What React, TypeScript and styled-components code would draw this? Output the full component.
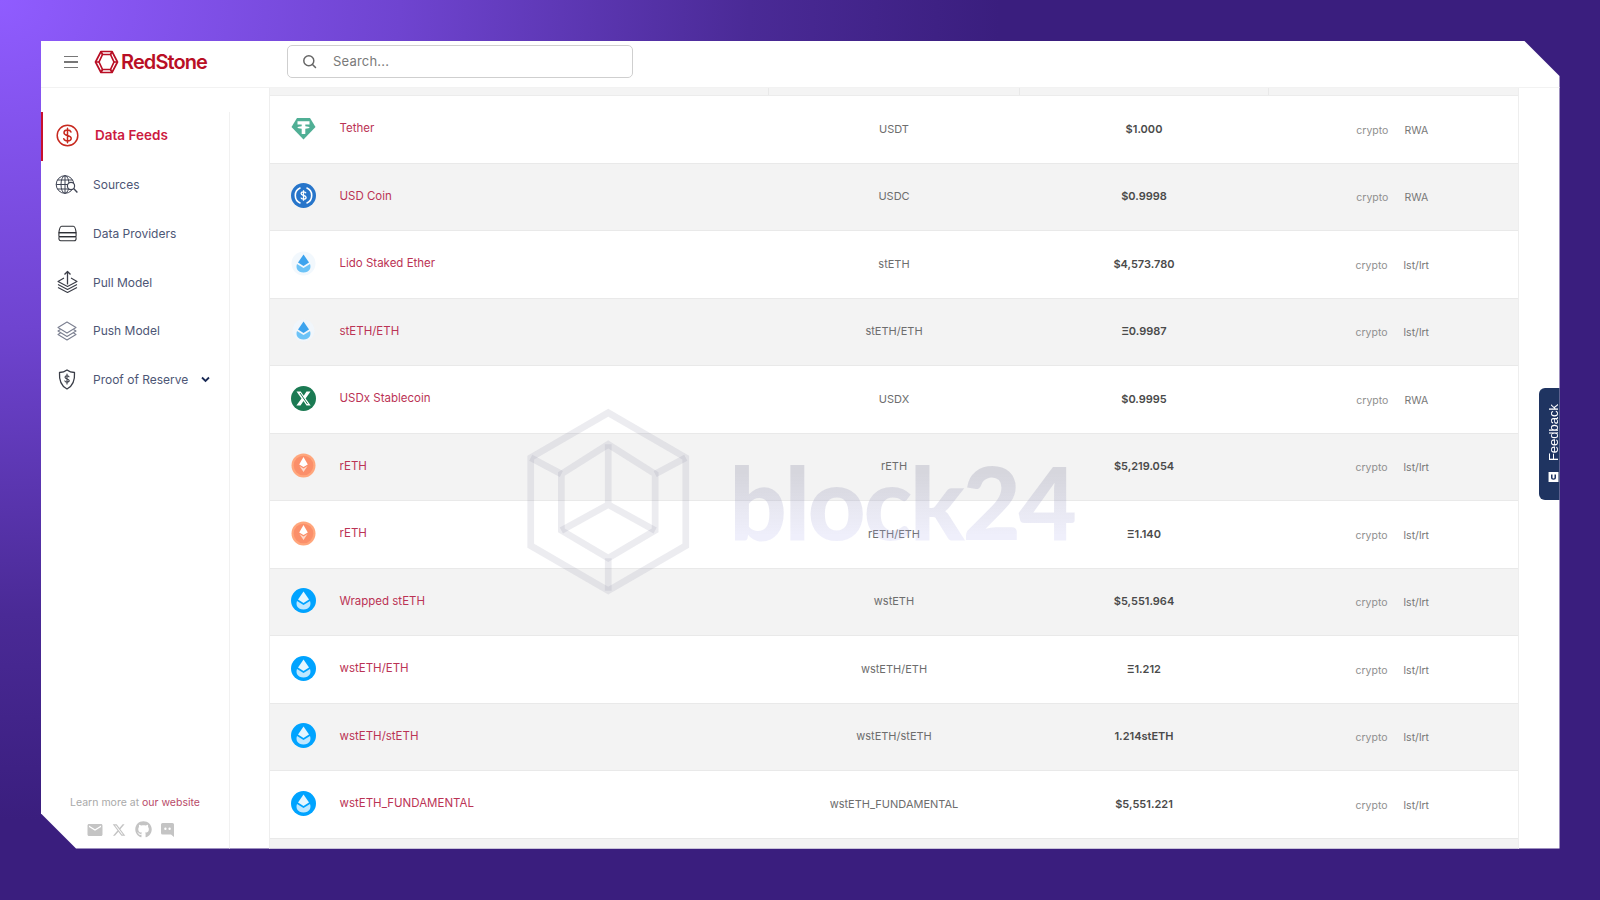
import React from "react";
import styled, { createGlobalStyle } from "styled-components";
import { FaGithub, FaXTwitter } from "react-icons/fa6";
import { MdEmail } from "react-icons/md";

const Global = createGlobalStyle`
  html, body { margin: 0; padding: 0; width: 1600px; height: 900px; overflow: hidden; }
  * { box-sizing: border-box; }
  body { font-family: "Inter", "Noto Sans", sans-serif; }
`;

const Backdrop = styled.div`
  width: 1600px;
  height: 900px;
  padding: 41px 40.5px 51.5px 41px;
  background: radial-gradient(ellipse 1000px 820px at 0 0, #905cff 0%, #6f44d0 40%, #4a2a96 75%, #3a1e7e 100%), #3a1e7e;
`;

const Panel = styled.div`
  position: relative;
  width: 100%;
  height: 100%;
  background: #fff;
  display: flex;
  flex-direction: column;
  overflow: hidden;
  clip-path: polygon(0 0, calc(100% - 35px) 0, 100% 35px, 100% 100%, 35px 100%, 0 calc(100% - 35px));
`;

const Header = styled.header`
  flex: 0 0 47px;
  display: flex;
  align-items: center;
  border-bottom: 1px solid #f2f2f2;
  padding: 0 0 4px 23px;
`;

const Burger = styled.div`
  width: 14px;
  display: flex;
  flex-direction: column;
  gap: 4px;
  margin-right: 16px;
  span { display: block; height: 1.5px; background: #777; }
`;

const Brand = styled.div`
  display: flex;
  align-items: center;
  gap: 2px;
  width: 193px;
  color: #b90f25;
  font-size: 20px;
  font-weight: 600;
  letter-spacing: -0.9px;
`;

const SearchBox = styled.div`
  width: 346px;
  height: 33px;
  margin-bottom: 2px;
  border: 1px solid #cfcfcf;
  border-radius: 5px;
  display: flex;
  align-items: center;
  gap: 16px;
  padding: 0 0 0 14px;
  color: #7a7a7a;
  font-size: 13px;
  letter-spacing: 0.2px;
`;

const Body = styled.div`
  flex: 1;
  display: flex;
  min-height: 0;
`;

const Sidebar = styled.aside`
  flex: 0 0 189px;
  margin-top: 24px;
  border-right: 1px solid #f1f1f1;
  display: flex;
  flex-direction: column;
`;

const NavItem = styled.div<{ $active?: boolean }>`
  height: 48.6px;
  display: flex;
  align-items: center;
  gap: ${(p) => (p.$active ? "15px" : "13px")};
  padding-left: ${(p) => (p.$active ? "11px" : "13px")};
  padding-bottom: ${(p) => (p.$active ? "2px" : "0")};
  border-left: ${(p) => (p.$active ? "2px solid #c8102e" : "0")};
  color: ${(p) => (p.$active ? "#cc1a3f" : "#4d5675")};
  font-size: ${(p) => (p.$active ? "13.5px" : "12px")};
  font-weight: ${(p) => (p.$active ? 600 : 400)};
`;

const NavIcon = styled.span`
  width: 26px;
  height: 26px;
  display: flex;
  align-items: center;
  justify-content: center;
  flex: none;
`;

const Chevron = styled.span`
  display: flex;
`;

const SideFooter = styled.div`
  margin-top: auto;
  padding-bottom: 10px;
  display: flex;
  flex-direction: column;
  align-items: center;
  gap: 12px;
  font-size: 10.5px;
  color: #a9a9a9;
  a { color: #b84a68; text-decoration: none; }
`;

const Socials = styled.div`
  display: flex;
  align-items: center;
  gap: 8.5px;
  padding-right: 9px;
  color: #c4c4c4;
`;

const Main = styled.main`
  flex: 1;
  padding: 0 40.5px 0 39px;
  overflow: hidden;
`;

const Table = styled.div`
  border-left: 1px solid #eee;
  border-right: 1px solid #eee;
  height: 100%;
  background: #f3f3f3;
`;

const HeadStrip = styled.div`
  height: 8px;
  display: grid;
  grid-template-columns: 498.5px 251px 249px 1fr;
  background: #f4f4f4;
  border-bottom: 1px solid #ececec;
  div { border-right: 1px solid #e9e9e9; }
`;

const Row = styled.div<{ $alt: boolean }>`
  height: 67.5px;
  display: grid;
  grid-template-columns: 498.5px 251px 249px 1fr;
  align-items: center;
  background: ${(p) => (p.$alt ? "#f3f3f3" : "#fff")};
  border-bottom: 1px solid #e9e9e9;
`;

const NameCell = styled.div`
  display: flex;
  align-items: center;
  gap: 23.5px;
  padding: 0 0 2px 21px;
  color: #bb3355;
  font-size: 11.5px;
  svg { flex: none; }
`;

const Symbol = styled.div`
  text-align: center;
  color: #6d6d6d;
  font-size: 11px;
  padding-bottom: 1px;
`;

const Price = styled.div`
  text-align: center;
  color: #4a4a4a;
  font-size: 11px;
  font-weight: 600;
  padding-bottom: 1px;
`;

const Tags = styled.div`
  display: flex;
  justify-content: center;
  gap: 16px;
  padding: 2px 2px 0 0;
`;

const Tag = styled.span<{ $muted?: boolean }>`
  font-size: 10.5px;
  color: ${(p) => (p.$muted ? "#8f8f8f" : "#777")};
`;

const Watermark = styled.div`
  position: absolute;
  left: 482.8px;
  top: 366.3px;
  display: flex;
  align-items: flex-start;
  gap: 37px;
  pointer-events: none;
`;

const WatermarkText = styled.span`
  margin-top: 37px;
  font-family: "Lato", sans-serif;
  font-size: 101px;
  line-height: 115px;
  font-weight: 900;
  letter-spacing: -2.5px;
  background: linear-gradient(180deg, rgba(140,140,165,0.28) 25%, rgba(175,175,235,0.2) 80%);
  -webkit-background-clip: text;
  background-clip: text;
  color: transparent;
`;

const FeedbackTab = styled.div`
  position: absolute;
  top: 347px;
  right: -6px;
  width: 27px;
  height: 112px;
  background: #1f3461;
  border-radius: 6px 0 0 6px;
  display: flex;
  flex-direction: column-reverse;
  align-items: center;
  justify-content: flex-start;
  gap: 10px;
  padding: 16px 0 17px 3px;
  color: #fff;
  font-family: "Liberation Sans", sans-serif;
  font-size: 13px;
`;

const FeedbackLabel = styled.span`
  writing-mode: vertical-rl;
  transform: rotate(180deg);
`;

const Hamburger = () => (
  <Burger>
    <span />
    <span />
    <span />
  </Burger>
);

const LogoMark = () => (
  <svg width="25" height="24" viewBox="0 0 25 24" fill="none" stroke="#b90f25" strokeWidth="1.7" strokeLinejoin="round">
    <path d="M7 1.5h11l5.5 10.5L18 22.5H7L1.5 12z" />
    <path d="M8.5 4.5h8L20 12l-3.5 7.5h-8L5 12z" />
    <path d="M7 1.5l1.5 3M18 1.5l-1.5 3M1.5 12H5M23.5 12H20M7 22.5l1.5-3M18 22.5l-1.5-3" />
  </svg>
);

const SearchIcon = () => (
  <svg width="15" height="15" viewBox="0 0 15 15" fill="none" stroke="#666" strokeWidth="1.5" strokeLinecap="round">
    <circle cx="6.8" cy="6.8" r="5" />
    <path d="M10.5 10.5l3 3" />
  </svg>
);

const ink = "#3f4454";

const DollarIcon = () => (
  <svg width="23" height="23" viewBox="0 0 23 23" fill="none" stroke="#c7291f" strokeWidth="1.5" strokeLinecap="round">
    <circle cx="11.5" cy="11.5" r="10.3" />
    <path d="M15 8c-.5-1.4-1.9-2-3.5-2-1.9 0-3.5.9-3.5 2.7 0 3.7 7.2 1.9 7.2 5.6 0 1.8-1.7 2.7-3.7 2.7-1.8 0-3.2-.8-3.7-2.2M11.5 4.2v14.6" />
  </svg>
);

const GlobeIcon = () => (
  <svg width="24" height="22" viewBox="0 0 24 22" fill="none" stroke={ink} strokeWidth="1">
    <circle cx="10" cy="10.5" r="8.8" />
    <ellipse cx="10" cy="10.5" rx="4" ry="8.8" />
    <path d="M1.2 10.5h17.6M2.4 6h15.2M2.4 15h15.2M10 1.7v17.6" />
    <circle cx="16" cy="12" r="3.6" fill="#fff" strokeWidth="1.2" />
    <path d="M18.6 14.6l3.8 3.8" strokeWidth="1.4" />
  </svg>
);

const ServerIcon = () => (
  <svg width="19" height="17" viewBox="0 0 21 18" fill="none" stroke="#2e3036" strokeWidth="1.2">
    <path d="M4 1h13c1.500 0 2.500 3 3 7H1c.5-4 1.500-7 3-7z" />
    <rect x="1" y="8" width="19" height="4.500" rx="1" />
    <path d="M1.500 12.500h18c.5 0 .5 1 .5 2 0 1.500-1 2.500-2 2.500H3c-1 0-2-1-2-2.500 0-1 0-2 .5-2z" />
  </svg>
);

const PullIcon = () => (
  <svg width="21" height="24" viewBox="0 0 21 24" fill="none" stroke="#3a3d47" strokeWidth="1.1" strokeLinejoin="round">
    <path d="M10.500 14.500V1.500M7.500 4.500l3-3 3 3" strokeWidth="1.3" />
    <path d="M7 8L1 11.500l9.500 5 9.500-5L14 8" />
    <path d="M1 14.500l9.500 5 9.500-5M1 17.500l9.500 5 9.500-5" />
  </svg>
);

const LayersIcon = () => (
  <svg width="20" height="20" viewBox="0 0 20 20" fill="none" stroke="#7c8091" strokeWidth="1.1" strokeLinejoin="round">
    <path d="M10 1L1 6.500 10 12l9-5.500z" />
    <path d="M3.500 8.500L1 10l9 5.500 9-5.500-2.500-1.500" />
    <path d="M3.500 12L1 13.500 10 19l9-5.500-2.500-1.500" />
  </svg>
);

const ShieldIcon = () => (
  <svg width="20" height="21" viewBox="0 0 20 21" fill="none" stroke="#3a3d47" strokeWidth="1.3" strokeLinecap="round" strokeLinejoin="round">
    <path d="M10 1c2 1.500 4.500 2.400 7.500 2.500.5 7.500-1.500 13.500-7.500 16.500C4 17 2 11 2.500 3.500 5.500 3.400 8 2.500 10 1z" />
    <path d="M12 7.800C11.500 7 10.800 6.700 10 6.700c-1 0-2 .5-2 1.600 0 2.200 4.200 1.100 4.200 3.300 0 1.100-1 1.600-2.200 1.600-1 0-1.900-.4-2.200-1.300M10 5v10" strokeWidth="1.1" />
  </svg>
);

const DownChevron = () => (
  <svg width="9" height="7" viewBox="0 0 9 7" fill="none" stroke="#1a2a55" strokeWidth="1.8">
    <path d="M1 1.500l3.500 3.500L8 1.500" />
  </svg>
);

const DiscordIcon = () => (
  <svg width="15" height="16" viewBox="0 0 15 16" fill="#c4c4c4">
    <path fillRule="evenodd" d="M2.500 1h10A1.500 1.500 0 0 1 14 2.500V15l-3-2.500H2.500A1.500 1.500 0 0 1 1 11V2.500A1.500 1.500 0 0 1 2.500 1zM5.400 5.600a1.200 1.200 0 1 0 0 2.400 1.200 1.200 0 0 0 0-2.400zm4.200 0a1.200 1.200 0 1 0 0 2.400 1.200 1.200 0 0 0 0-2.400z" />
  </svg>
);

const FeedbackIcon = () => (
  <svg width="13" height="13" viewBox="0 0 12 12">
    <path fill="#fff" fillRule="evenodd" d="M1 1h10v10H1zM3.500 3.500v3.200c0 1.300.9 2 2.500 2s2.500-.7 2.500-2V3.500H7v3.200c0 .5-.3.8-1 .8s-1-.3-1-.8V3.500z" />
  </svg>
);

type CoinKind = "usdt" | "usdc" | "steth" | "stethSmall" | "usdx" | "reth" | "wsteth";

const Drop = ({ fill, shade }: { fill: string; shade: string }) => (
  <>
    <path d="M12.500 3.500L18 11.500 12.500 15 7 11.500z" fill={fill} />
    <path d="M6 13l6.500 4 6.500-4c1.500 4-.5 8.500-6.500 8.500S4.500 17 6 13z" fill={shade} />
  </>
);

const Coin = ({ kind }: { kind: CoinKind }) => {
  const common = { width: 25, height: 25, viewBox: "0 0 25 25" };
  switch (kind) {
    case "usdt":
      return (
        <svg {...common}>
          <path d="M6 2h13L24.500 11 12.500 23.500.5 11z" fill="#50af95" />
          <path d="M6.500 5.200h12v3.200h-4.200v1.900c2.300.2 4.200.6 4.200 1.200s-1.900 1-4.200 1.200V18h-3.600v-5.300c-2.300-.2-4.200-.6-4.200-1.200s1.900-1 4.200-1.200V8.400H6.500z" fill="#fff" />
        </svg>
      );
    case "usdc":
      return (
        <svg {...common}>
          <circle cx="12.500" cy="12.500" r="12.500" fill="#2775ca" />
          <path d="M9.500 4.800a8.300 8.300 0 0 0 0 15.400M15.500 4.800a8.300 8.300 0 0 1 0 15.400" fill="none" stroke="#fff" strokeWidth="1.600" />
          <path d="M15 10.300c-.3-1-1.200-1.500-2.500-1.500s-2.400.6-2.400 1.800c0 2.500 5 1.300 5 3.800 0 1.200-1.200 1.800-2.600 1.800-1.300 0-2.300-.6-2.600-1.600M12.500 7.300v10.400" fill="none" stroke="#fff" strokeWidth="1.300" />
        </svg>
      );
    case "steth":
      return (
        <svg {...common}>
          <circle cx="12.500" cy="12.500" r="12" fill="#f2f8fd" />
          <Drop fill="#3ca3ee" shade="#6cc3f7" />
        </svg>
      );
    case "stethSmall":
      return (
        <svg {...common}>
          <circle cx="12.500" cy="12.500" r="11" fill="#f0f6fc" opacity="0.8" />
          <Drop fill="#3ca3ee" shade="#6cc3f7" />
        </svg>
      );
    case "usdx":
      return (
        <svg {...common}>
          <circle cx="12.500" cy="12.500" r="12.500" fill="#1b7a53" />
          <path d="M5.500 5.500h4.200l3 4.300 2.800-4.300h4l-4.900 6.900 5.100 7.100h-4.200l-3-4.400-3 4.400H5.400l5.100-7.100z" fill="#fff" />
          <path d="M9 7l7.500 11" stroke="#1b7a53" strokeWidth="1" />
        </svg>
      );
    case "reth":
      return (
        <svg {...common}>
          <circle cx="12.500" cy="12.500" r="12" fill="#ffa67c" />
          <circle cx="12.500" cy="12.500" r="9.800" fill="#fb8f6a" />
          <path d="M12.500 4l4.300 7.500-4.300 2.500-4.300-2.500z" fill="#fff" />
          <path d="M8.500 13l4 2.400 4-2.400-4 6z" fill="#fdd9cb" />
        </svg>
      );
    default:
      return (
        <svg {...common}>
          <circle cx="12.500" cy="12.500" r="12.500" fill="#00a3ff" />
          <Drop fill="#e6f6ff" shade="#bfe7ff" />
        </svg>
      );
  }
};

const navItems = [
  { label: "Sources", icon: <GlobeIcon /> },
  { label: "Data Providers", icon: <ServerIcon /> },
  { label: "Pull Model", icon: <PullIcon /> },
  { label: "Push Model", icon: <LayersIcon /> },
];

const rows: { name: string; symbol: string; price: string; tag: string; coin: CoinKind }[] = [
  { name: "Tether", symbol: "USDT", price: "$1.000", tag: "RWA", coin: "usdt" },
  { name: "USD Coin", symbol: "USDC", price: "$0.9998", tag: "RWA", coin: "usdc" },
  { name: "Lido Staked Ether", symbol: "stETH", price: "$4,573.780", tag: "lst/lrt", coin: "steth" },
  { name: "stETH/ETH", symbol: "stETH/ETH", price: "Ξ0.9987", tag: "lst/lrt", coin: "stethSmall" },
  { name: "USDx Stablecoin", symbol: "USDX", price: "$0.9995", tag: "RWA", coin: "usdx" },
  { name: "rETH", symbol: "rETH", price: "$5,219.054", tag: "lst/lrt", coin: "reth" },
  { name: "rETH", symbol: "rETH/ETH", price: "Ξ1.140", tag: "lst/lrt", coin: "reth" },
  { name: "Wrapped stETH", symbol: "wstETH", price: "$5,551.964", tag: "lst/lrt", coin: "wsteth" },
  { name: "wstETH/ETH", symbol: "wstETH/ETH", price: "Ξ1.212", tag: "lst/lrt", coin: "wsteth" },
  { name: "wstETH/stETH", symbol: "wstETH/stETH", price: "1.214stETH", tag: "lst/lrt", coin: "wsteth" },
  { name: "wstETH_FUNDAMENTAL", symbol: "wstETH_FUNDAMENTAL", price: "$5,551.221", tag: "lst/lrt", coin: "wsteth" },
];

const WatermarkHex = () => (
  <svg width="168.5" height="191.4" viewBox="0 0 176 200" fill="none" stroke="rgba(140,140,165,0.17)" strokeWidth="7" strokeLinejoin="miter">
    <path d="M88 6l81 47v92l-81 47-81-47V53z" />
    <path d="M88 39l49 31v59l-49 29-49-29V70z" />
    <path d="M88 39v63M88 102l-49 27M88 102l49 27M7 53l32 17M169 53l-32 17M88 158v34" />
  </svg>
);

export default function App() {
  return (
    <>
      <Global />
      <Backdrop>
        <Panel>
          <Header>
            <Hamburger />
            <Brand>
              <LogoMark />
              RedStone
            </Brand>
            <SearchBox>
              <SearchIcon />
              Search...
            </SearchBox>
          </Header>
          <Body>
            <Sidebar>
              <NavItem $active>
                <NavIcon>
                  <DollarIcon />
                </NavIcon>
                Data Feeds
              </NavItem>
              {navItems.map((item) => (
                <NavItem key={item.label}>
                  <NavIcon>{item.icon}</NavIcon>
                  {item.label}
                </NavItem>
              ))}
              <NavItem>
                <NavIcon>
                  <ShieldIcon />
                </NavIcon>
                Proof of Reserve
                <Chevron>
                  <DownChevron />
                </Chevron>
              </NavItem>
              <SideFooter>
                <span>
                  Learn more at <a href="#site">our website</a>
                </span>
                <Socials>
                  <MdEmail size={18} />
                  <FaXTwitter size={14} />
                  <FaGithub size={17} />
                  <DiscordIcon />
                </Socials>
              </SideFooter>
            </Sidebar>
            <Main>
              <Table>
                <HeadStrip>
                  <div />
                  <div />
                  <div />
                </HeadStrip>
                {rows.map((r, i) => (
                  <Row key={r.symbol} $alt={i % 2 === 1}>
                    <NameCell>
                      <Coin kind={r.coin} />
                      {r.name}
                    </NameCell>
                    <Symbol>{r.symbol}</Symbol>
                    <Price>{r.price}</Price>
                    <Tags>
                      <Tag $muted>crypto</Tag>
                      <Tag>{r.tag}</Tag>
                    </Tags>
                  </Row>
                ))}
              </Table>
            </Main>
          </Body>
          <Watermark>
            <WatermarkHex />
            <WatermarkText>block24</WatermarkText>
          </Watermark>
          <FeedbackTab>
            <FeedbackIcon />
            <FeedbackLabel>Feedback</FeedbackLabel>
          </FeedbackTab>
        </Panel>
      </Backdrop>
    </>
  );
}
